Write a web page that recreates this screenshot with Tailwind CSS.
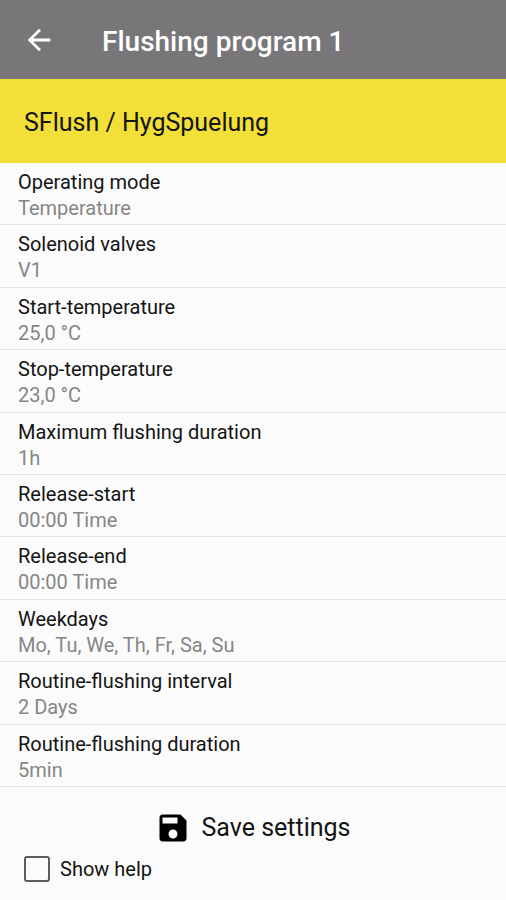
<!DOCTYPE html>
<html lang="en">

<head>
	<meta charset="UTF-8">
	<meta name="viewport" content="width=device-width, initial-scale=1.0">
	<title>Flushing program 1</title>
	<script src="https://cdn.jsdelivr.net/npm/@tailwindcss/browser@4"></script>
	<style>
		body {
			font-family: Roboto, sans-serif;
		}
	</style>
</head>

<body class="flex min-h-screen flex-col bg-[#fbfbfb] text-[#141414]">

	<header class="flex h-[79px] items-center bg-[#79767a] px-[22px] text-white">
		<a href="#" aria-label="Back" class="mr-[46px]">
			<svg class="h-[34px] w-[34px]" viewBox="0 0 24 24" fill="currentColor">
				<path d="M20 11H7.83l5.59-5.59L12 4l-8 8 8 8 1.41-1.41L7.83 13H20v-2z" />
			</svg>
		</a>
		<h1 class="pt-1 text-[28px] leading-8 font-medium">Flushing program 1</h1>
	</header>

	<h2 class="flex h-[84px] items-center bg-[#f2df37] px-6 pt-1 text-[25px] leading-8">SFlush / HygSpuelung</h2>

	<main class="flex flex-1 flex-col">
		<dl class="flex flex-1 flex-col text-[20px] leading-[26px]">
			<div class="flex-1 border-b border-[#e4e4e4] px-[18px] pt-1.5">
				<dt>Operating mode</dt>
				<dd class="text-[#868686]">Temperature</dd>
			</div>
			<div class="flex-1 border-b border-[#e4e4e4] px-[18px] pt-1.5">
				<dt>Solenoid valves</dt>
				<dd class="text-[#868686]">V1</dd>
			</div>
			<div class="flex-1 border-b border-[#e4e4e4] px-[18px] pt-1.5">
				<dt>Start-temperature</dt>
				<dd class="text-[#868686]">25,0 °C</dd>
			</div>
			<div class="flex-1 border-b border-[#e4e4e4] px-[18px] pt-1.5">
				<dt>Stop-temperature</dt>
				<dd class="text-[#868686]">23,0 °C</dd>
			</div>
			<div class="flex-1 border-b border-[#e4e4e4] px-[18px] pt-1.5">
				<dt>Maximum flushing duration</dt>
				<dd class="text-[#868686]">1h</dd>
			</div>
			<div class="flex-1 border-b border-[#e4e4e4] px-[18px] pt-1.5">
				<dt>Release-start</dt>
				<dd class="text-[#868686]">00:00 Time</dd>
			</div>
			<div class="flex-1 border-b border-[#e4e4e4] px-[18px] pt-1.5">
				<dt>Release-end</dt>
				<dd class="text-[#868686]">00:00 Time</dd>
			</div>
			<div class="flex-1 border-b border-[#e4e4e4] px-[18px] pt-1.5">
				<dt>Weekdays</dt>
				<dd class="text-[#868686]">Mo, Tu, We, Th, Fr, Sa, Su</dd>
			</div>
			<div class="flex-1 border-b border-[#e4e4e4] px-[18px] pt-1.5">
				<dt>Routine-flushing interval</dt>
				<dd class="text-[#868686]">2 Days</dd>
			</div>
			<div class="flex-1 border-b border-[#e4e4e4] px-[18px] pt-1.5">
				<dt>Routine-flushing duration</dt>
				<dd class="text-[#868686]">5min</dd>
			</div>
		</dl>
	</main>

	<footer class="flex flex-col px-6 pt-[23px] pb-[18px]">
		<button type="button" class="flex items-center gap-2.5 self-center text-[25px] leading-8">
			<svg class="h-9 w-9" viewBox="0 0 24 24" fill="black">
				<path d="M17 3H5c-1.11 0-2 .9-2 2v14c0 1.1.89 2 2 2h14c1.1 0 2-.9 2-2V7l-4-4zm-5 16c-1.66 0-3-1.34-3-3s1.34-3 3-3 3 1.34 3 3-1.34 3-3 3zm3-10H5V5h10v4z" />
			</svg>
			Save settings
		</button>
		<label class="mt-2.5 flex items-center gap-2.5 self-start text-[20px] leading-[26px]">
			<input type="checkbox" class="h-[26px] w-[26px] appearance-none rounded-[3px] border-2 border-[#5c5c5c]">
			Show help
		</label>
	</footer>

</body>

</html>
